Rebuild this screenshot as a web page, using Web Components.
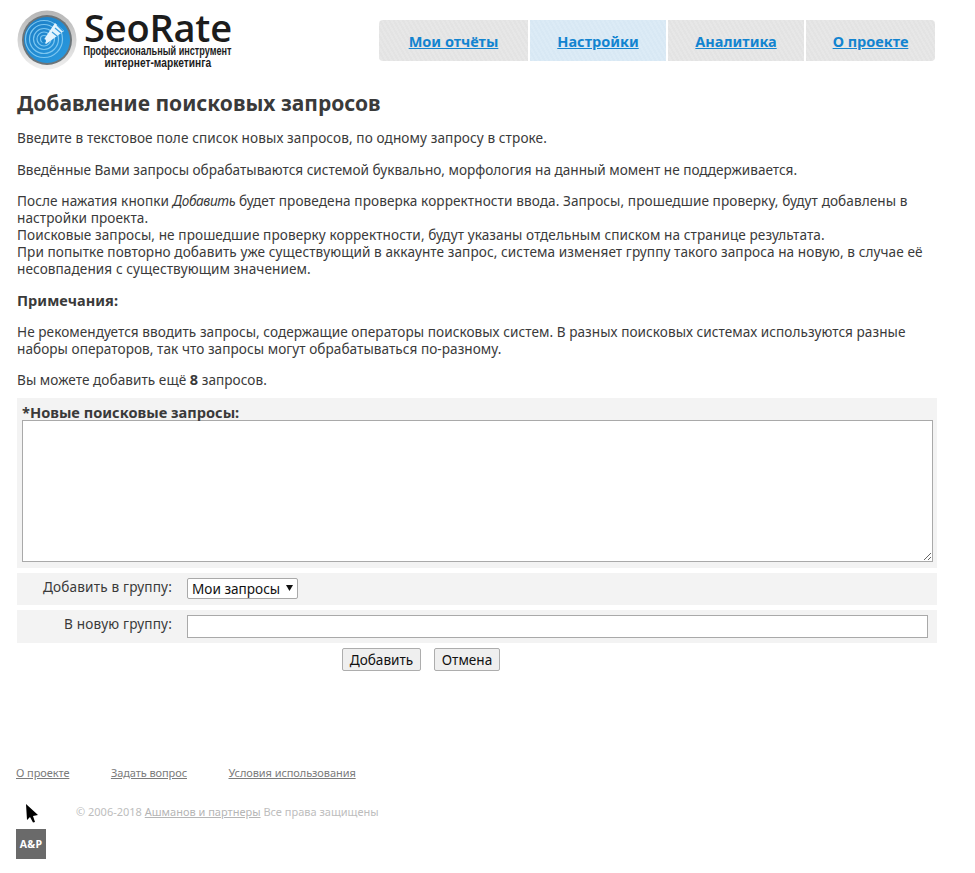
<!DOCTYPE html>
<html lang="ru">
<head>
<meta charset="utf-8">
<title>SeoRate</title>
<style>
  html, body { margin: 0; padding: 0; background: #fff; }
  body { font-family: "Noto Sans", Tahoma, sans-serif; font-size: 13.6px; color: #3a3a3a; }
</style>
</head>
<body>
<seo-page>
  <seo-header slot="header"></seo-header>
  <seo-help slot="content"></seo-help>
  <seo-form slot="content"></seo-form>
  <seo-footer slot="footer"></seo-footer>
</seo-page>

<script>
class SeoPage extends HTMLElement {
  constructor() {
    super();
    this.attachShadow({ mode: 'open' }).innerHTML = `
    <style>
      :host { display: block; width: 975px; height: 873px; box-sizing: border-box; padding: 0 38px 0 17px; overflow: hidden; }
      .wrap { display: flex; flex-direction: column; height: 100%; }
      .footer { margin-top: 94px; margin-left: -1px; }
    </style>
    <div class="wrap">
      <slot name="header"></slot>
      <slot name="content"></slot>
      <div class="footer"><slot name="footer"></slot></div>
    </div>`;
  }
}

class SeoHeader extends HTMLElement {
  constructor() {
    super();
    this.attachShadow({ mode: 'open' }).innerHTML = `
    <style>
      :host { display: flex; justify-content: space-between; align-items: flex-start; height: 90px; padding-right: 2px; }
      .logo { display: flex; gap: 6px; padding-top: 10px; }
      .name { display: flex; flex-direction: column; align-items: center; width: 150px; color: #1c1c1c; }
      .big { font: 600 38px/35px "Open Sans", sans-serif; letter-spacing: -.2px; }
      .sub { font: 700 12px/12px "Liberation Sans", sans-serif; white-space: nowrap; transform: scaleX(.85); }
      .sub.wide { transform: scaleX(.76); margin-left: -2px; }
      nav { display: flex; gap: 2px; margin-top: 20px; }
    </style>
    <div class="logo">
      <svg width="60" height="60" viewBox="0 0 60 60">
        <defs>
          <linearGradient id="rim" x1="0" y1="0" x2="0" y2="1">
            <stop offset="0" stop-color="#b5b5b5"/><stop offset="1" stop-color="#f0f0f0"/>
          </linearGradient>
          <linearGradient id="disc" x1="0" y1="0" x2="1" y2="1">
            <stop offset="0" stop-color="#1a7cc4"/><stop offset="1" stop-color="#2a9be0"/>
          </linearGradient>
        </defs>
        <circle cx="30" cy="30" r="29.5" fill="url(#rim)"/>
        <circle cx="30" cy="30" r="25" fill="#6b7479"/>
        <circle cx="30" cy="30" r="23" fill="url(#disc)"/>
        <g fill="none" stroke="#7cc6f0" stroke-width="1.2">
          <circle cx="27" cy="29" r="3.5"/>
          <circle cx="27" cy="29" r="7"/>
          <circle cx="27" cy="29" r="10.5"/>
          <circle cx="27" cy="29" r="14.5"/>
          <circle cx="27" cy="29" r="18.5"/>
        </g>
        <path d="M26 31 L38 13 L47 21 L29 34 Z" fill="#e4f4fd"/>
        <path d="M38 18 L44 23 M40 15 L46 21 M35 22 L40 26" stroke="#3a9edd" stroke-width="1.2"/>
        <circle cx="27" cy="31" r="2" fill="#1a85cc"/>
      </svg>
      <div class="name">
        <div class="big">SeoRate</div>
        <div class="sub wide">Профессиональный инструмент</div>
        <div class="sub">интернет-маркетинга</div>
      </div>
    </div>
    <nav>
      <seo-tab first style="width:149px">Мои отчёты</seo-tab>
      <seo-tab active style="width:136px">Настройки</seo-tab>
      <seo-tab style="width:136px">Аналитика</seo-tab>
      <seo-tab last style="width:129px">О проекте</seo-tab>
    </nav>`;
  }
}

class SeoTab extends HTMLElement {
  constructor() {
    super();
    this.attachShadow({ mode: 'open' }).innerHTML = `
    <style>
      :host { display: flex; align-items: center; justify-content: center; height: 41px; box-sizing: border-box;
        background: repeating-linear-gradient(60deg, #e3e3e3 0 2px, #e7e7e7 2px 4px); }
      :host([active]) { background: repeating-linear-gradient(60deg, #d8e8f4 0 2px, #dcebf6 2px 4px); }
      :host([first]) { border-radius: 4px 0 0 4px; }
      :host([last]) { border-radius: 0 4px 4px 0; }
      a { color: #1284d0; font-weight: 700; font-size: 14.5px; text-decoration: underline; }
    </style>
    <a href="#"><slot></slot></a>`;
  }
}

class SeoHelp extends HTMLElement {
  constructor() {
    super();
    this.attachShadow({ mode: 'open' }).innerHTML = `
    <style>
      :host { display: block; line-height: 17px; }
      h1 { font-size: 21px; line-height: 26px; font-weight: 700; margin: 0 0 13px; }
      p { margin: 0 0 14.2px; letter-spacing: .05px; }
      .p1 { letter-spacing: .1px; margin-bottom: 15px; }
      .p2 { letter-spacing: -.01px; margin-bottom: 14px; }
      .p3 { letter-spacing: .08px; margin-bottom: 15px; }
      .note { margin-bottom: 13.8px; }
      b { font-size: 14.5px; }
      i { letter-spacing: -.4px; }
    </style>
    <h1>Добавление поисковых запросов</h1>
    <p class="p1">Введите в текстовое поле список новых запросов, по одному запросу в строке.</p>
    <p class="p2">Введённые Вами запросы обрабатываются системой буквально, морфология на данный момент не поддерживается.</p>
    <p class="p3">После нажатия кнопки <i>Добавить</i> будет проведена проверка корректности ввода. Запросы, прошедшие проверку, будут добавлены в настройки проекта.<br>
    Поисковые запросы, не прошедшие проверку корректности, будут указаны отдельным списком на странице результата.<br>
    При попытке повторно добавить уже существующий в аккаунте запрос, система изменяет группу такого запроса на новую, в случае её несовпадения с существующим значением.</p>
    <p class="note"><b>Примечания:</b></p>
    <p>Не рекомендуется вводить запросы, содержащие операторы поисковых систем. В разных поисковых системах используются разные наборы операторов, так что запросы могут обрабатываться по-разному.</p>
    <p>Вы можете добавить ещё <b>8</b> запросов.</p>`;
  }
}

class SeoForm extends HTMLElement {
  constructor() {
    super();
    this.attachShadow({ mode: 'open' }).innerHTML = `
    <style>
      :host { display: block; width: 920px; margin-top: -4.4px; }
      .block { background: #f3f3f3; padding: 6px 5px; margin-bottom: 5px; }
      .block b { display: block; line-height: 16px; font-size: 14.6px; }
      textarea { display: block; box-sizing: border-box; width: 911px; height: 142px; margin: 0; border: 1px solid #a9a9a9; background: #fff; }
      .row { display: grid; grid-template-columns: 155px auto; column-gap: 15px; align-items: start; background: #f3f3f3; margin-bottom: 5px; }
      .row label { text-align: right; line-height: 17px; letter-spacing: .17px; }
      .r1 { height: 32px; padding-top: 5px; box-sizing: border-box; }
      .r2 { height: 33px; padding-top: 5px; box-sizing: border-box; }
      .sel { position: relative; width: 111px; height: 21px; }
      select { appearance: none; width: 111px; height: 21px; box-sizing: border-box; margin: 0; padding: 0 0 0 4px; border: 1px solid #a9a9a9; border-radius: 2px; background: #fff; color: #111; font: 13.6px "Noto Sans", sans-serif; }
      .sel svg { position: absolute; left: 99px; top: 7px; }
      input { display: block; box-sizing: border-box; width: 741px; height: 23px; margin: 0; border: 1px solid #a9a9a9; background: #fff; }
      .buttons { display: flex; gap: 13px; padding-left: 325px; margin-top: 1px; }
      button { height: 23px; box-sizing: border-box; padding: 0; border: 1px solid #adadad; border-radius: 2px; background: #efefef; color: #111; font: 13.6px "Noto Sans", sans-serif; }
      .ok { width: 79px; }
      .no { width: 66px; }
    </style>
    <div class="block">
      <b>*Новые поисковые запросы:</b>
      <textarea></textarea>
    </div>
    <div class="row r1">
      <label>Добавить в группу:</label>
      <div class="sel">
        <select><option>Мои запросы</option></select>
        <svg width="7" height="6" viewBox="0 0 7 6"><path d="M0 0H7L3.5 6Z" fill="#111"/></svg>
      </div>
    </div>
    <div class="row r2">
      <label>В новую группу:</label>
      <input type="text">
    </div>
    <div class="buttons">
      <button class="ok">Добавить</button>
      <button class="no">Отмена</button>
    </div>`;
  }
}

class SeoFooter extends HTMLElement {
  constructor() {
    super();
    this.attachShadow({ mode: 'open' }).innerHTML = `
    <style>
      :host { display: block; font-size: 11px; line-height: 16px; }
      .links { display: flex; gap: 41.5px; letter-spacing: -.08px; }
      .links a { color: #7b7b7b; }
      .bottom { display: flex; gap: 30px; margin-top: 22px; }
      .marks { display: flex; flex-direction: column; width: 30px; }
      .marks svg { margin-left: 9px; }
      .ap { display: flex; align-items: center; justify-content: center; width: 30px; height: 30px; margin-top: 5px; background: #6a6a6a; color: #fff; font: 700 10.5px "Open Sans", sans-serif; letter-spacing: .3px; }
      .copy { color: #bdbdbd; padding-top: 1px; }
      .copy a { color: #b5b5b5; }
    </style>
    <div class="links">
      <a href="#">О проекте</a>
      <a href="#">Задать вопрос</a>
      <a href="#">Условия использования</a>
    </div>
    <div class="bottom">
      <div class="marks">
        <svg width="14" height="21" viewBox="0 0 14 21"><path d="M1 1 L2 17 L5 14 L8 19.5 L10 19 L8 13 L13 12 Z" fill="#000"/></svg>
        <div class="ap">A&amp;P</div>
      </div>
      <div class="copy">© 2006-2018 <a href="#">Ашманов и партнеры</a> Все права защищены</div>
    </div>`;
  }
}

customElements.define('seo-tab', SeoTab);
customElements.define('seo-header', SeoHeader);
customElements.define('seo-help', SeoHelp);
customElements.define('seo-form', SeoForm);
customElements.define('seo-footer', SeoFooter);
customElements.define('seo-page', SeoPage);
</script>
</body>
</html>
